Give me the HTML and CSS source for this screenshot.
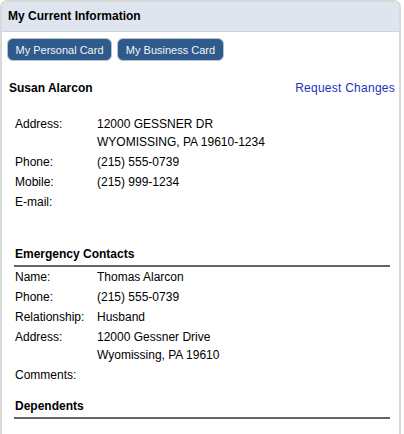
FILE: index.html
```html
<!DOCTYPE html>
<html>
<head>
<meta charset="utf-8">
<link rel="stylesheet" href="styles.css">
</head>
<body>
<div class="panel">
  <div class="panel-head">My Current Information</div>
  <div class="panel-body">
    <div class="btn-row">
      <button class="btn">My Personal Card</button>
      <button class="btn">My Business Card</button>
    </div>
    <div class="name-row">
      <span class="name">Susan Alarcon</span>
      <a class="link" href="#">Request Changes</a>
    </div>
    <div class="info main-info">
      <div class="row"><span class="lbl">Address:</span><span class="val">12000 GESSNER DR<br>WYOMISSING, PA 19610-1234</span></div>
      <div class="row"><span class="lbl">Phone:</span><span class="val">(215) 555-0739</span></div>
      <div class="row"><span class="lbl">Mobile:</span><span class="val">(215) 999-1234</span></div>
      <div class="row"><span class="lbl">E-mail:</span><span class="val"></span></div>
    </div>
    <div class="section emergency">
      <div class="section-title">Emergency Contacts</div>
      <div class="info">
        <div class="row"><span class="lbl">Name:</span><span class="val">Thomas Alarcon</span></div>
        <div class="row"><span class="lbl">Phone:</span><span class="val">(215) 555-0739</span></div>
        <div class="row"><span class="lbl">Relationship:</span><span class="val">Husband</span></div>
        <div class="row"><span class="lbl">Address:</span><span class="val">12000 Gessner Drive<br>Wyomissing, PA 19610</span></div>
        <div class="row"><span class="lbl">Comments:</span><span class="val"></span></div>
      </div>
    </div>
    <div class="section dependents">
      <div class="section-title">Dependents</div>
    </div>
  </div>
</div>
</body>
</html>
```
FILE: styles.css
```css
html, body {
  margin: 0;
  padding: 0;
  background: #fff;
  font-family: "Liberation Sans", Arial, sans-serif;
  font-size: 12px;
  color: #000;
}
.panel {
  width: 397px;
  height: 432px;
  border: 2px solid #d9d9d9;
  border-bottom: 0;
  border-radius: 7px 7px 0 0;
  box-sizing: content-box;
  overflow: hidden;
}
.panel-head {
  height: 29px;
  line-height: 29px;
  background: #dfe5ee;
  border-bottom: 1px solid #cfd4da;
  border-radius: 5px 5px 0 0;
  padding-left: 6px;
  font-weight: bold;
  font-size: 12px;
}
.panel-body {
  padding: 6px 4px 0 5px;
}
.btn-row {
  display: flex;
  gap: 5px;
}
.btn {
  height: 23px;
  padding: 0;
  background: #2e5a8c;
  color: #f2f4f8;
  border: 1px solid #b9c3cf;
  border-radius: 6px;
  font-family: "Liberation Sans", Arial, sans-serif;
  font-size: 11px;
  line-height: 20px;
  white-space: nowrap;
  text-align: center;
}
.btn:first-child { width: 105px; }
.btn:last-child { width: 107px; }
.name-row {
  display: flex;
  justify-content: space-between;
  align-items: center;
  margin-top: 20px;
  padding-left: 2px;
  line-height: 14px;
}
.name {
  font-weight: bold;
}
.link {
  color: #2233bb;
  text-decoration: none;
  letter-spacing: 0.25px;
}
.info {
  display: flex;
  flex-direction: column;
}
.main-info {
  margin: 19px 0 0 8px;
}
.row {
  display: grid;
  grid-template-columns: 82px 1fr;
  line-height: 18px;
  padding: 1px 0;
}
.section {
  margin: 0 5px 0 7px;
}
.emergency {
  margin-top: 35px;
}
.dependents {
  margin-top: 14px;
}
.section-title {
  font-weight: bold;
  line-height: 14px;
  padding-bottom: 4px;
  padding-left: 1px;
  border-bottom: 2px solid #666;
}
.section .row {
  padding-left: 1px;
}
```
